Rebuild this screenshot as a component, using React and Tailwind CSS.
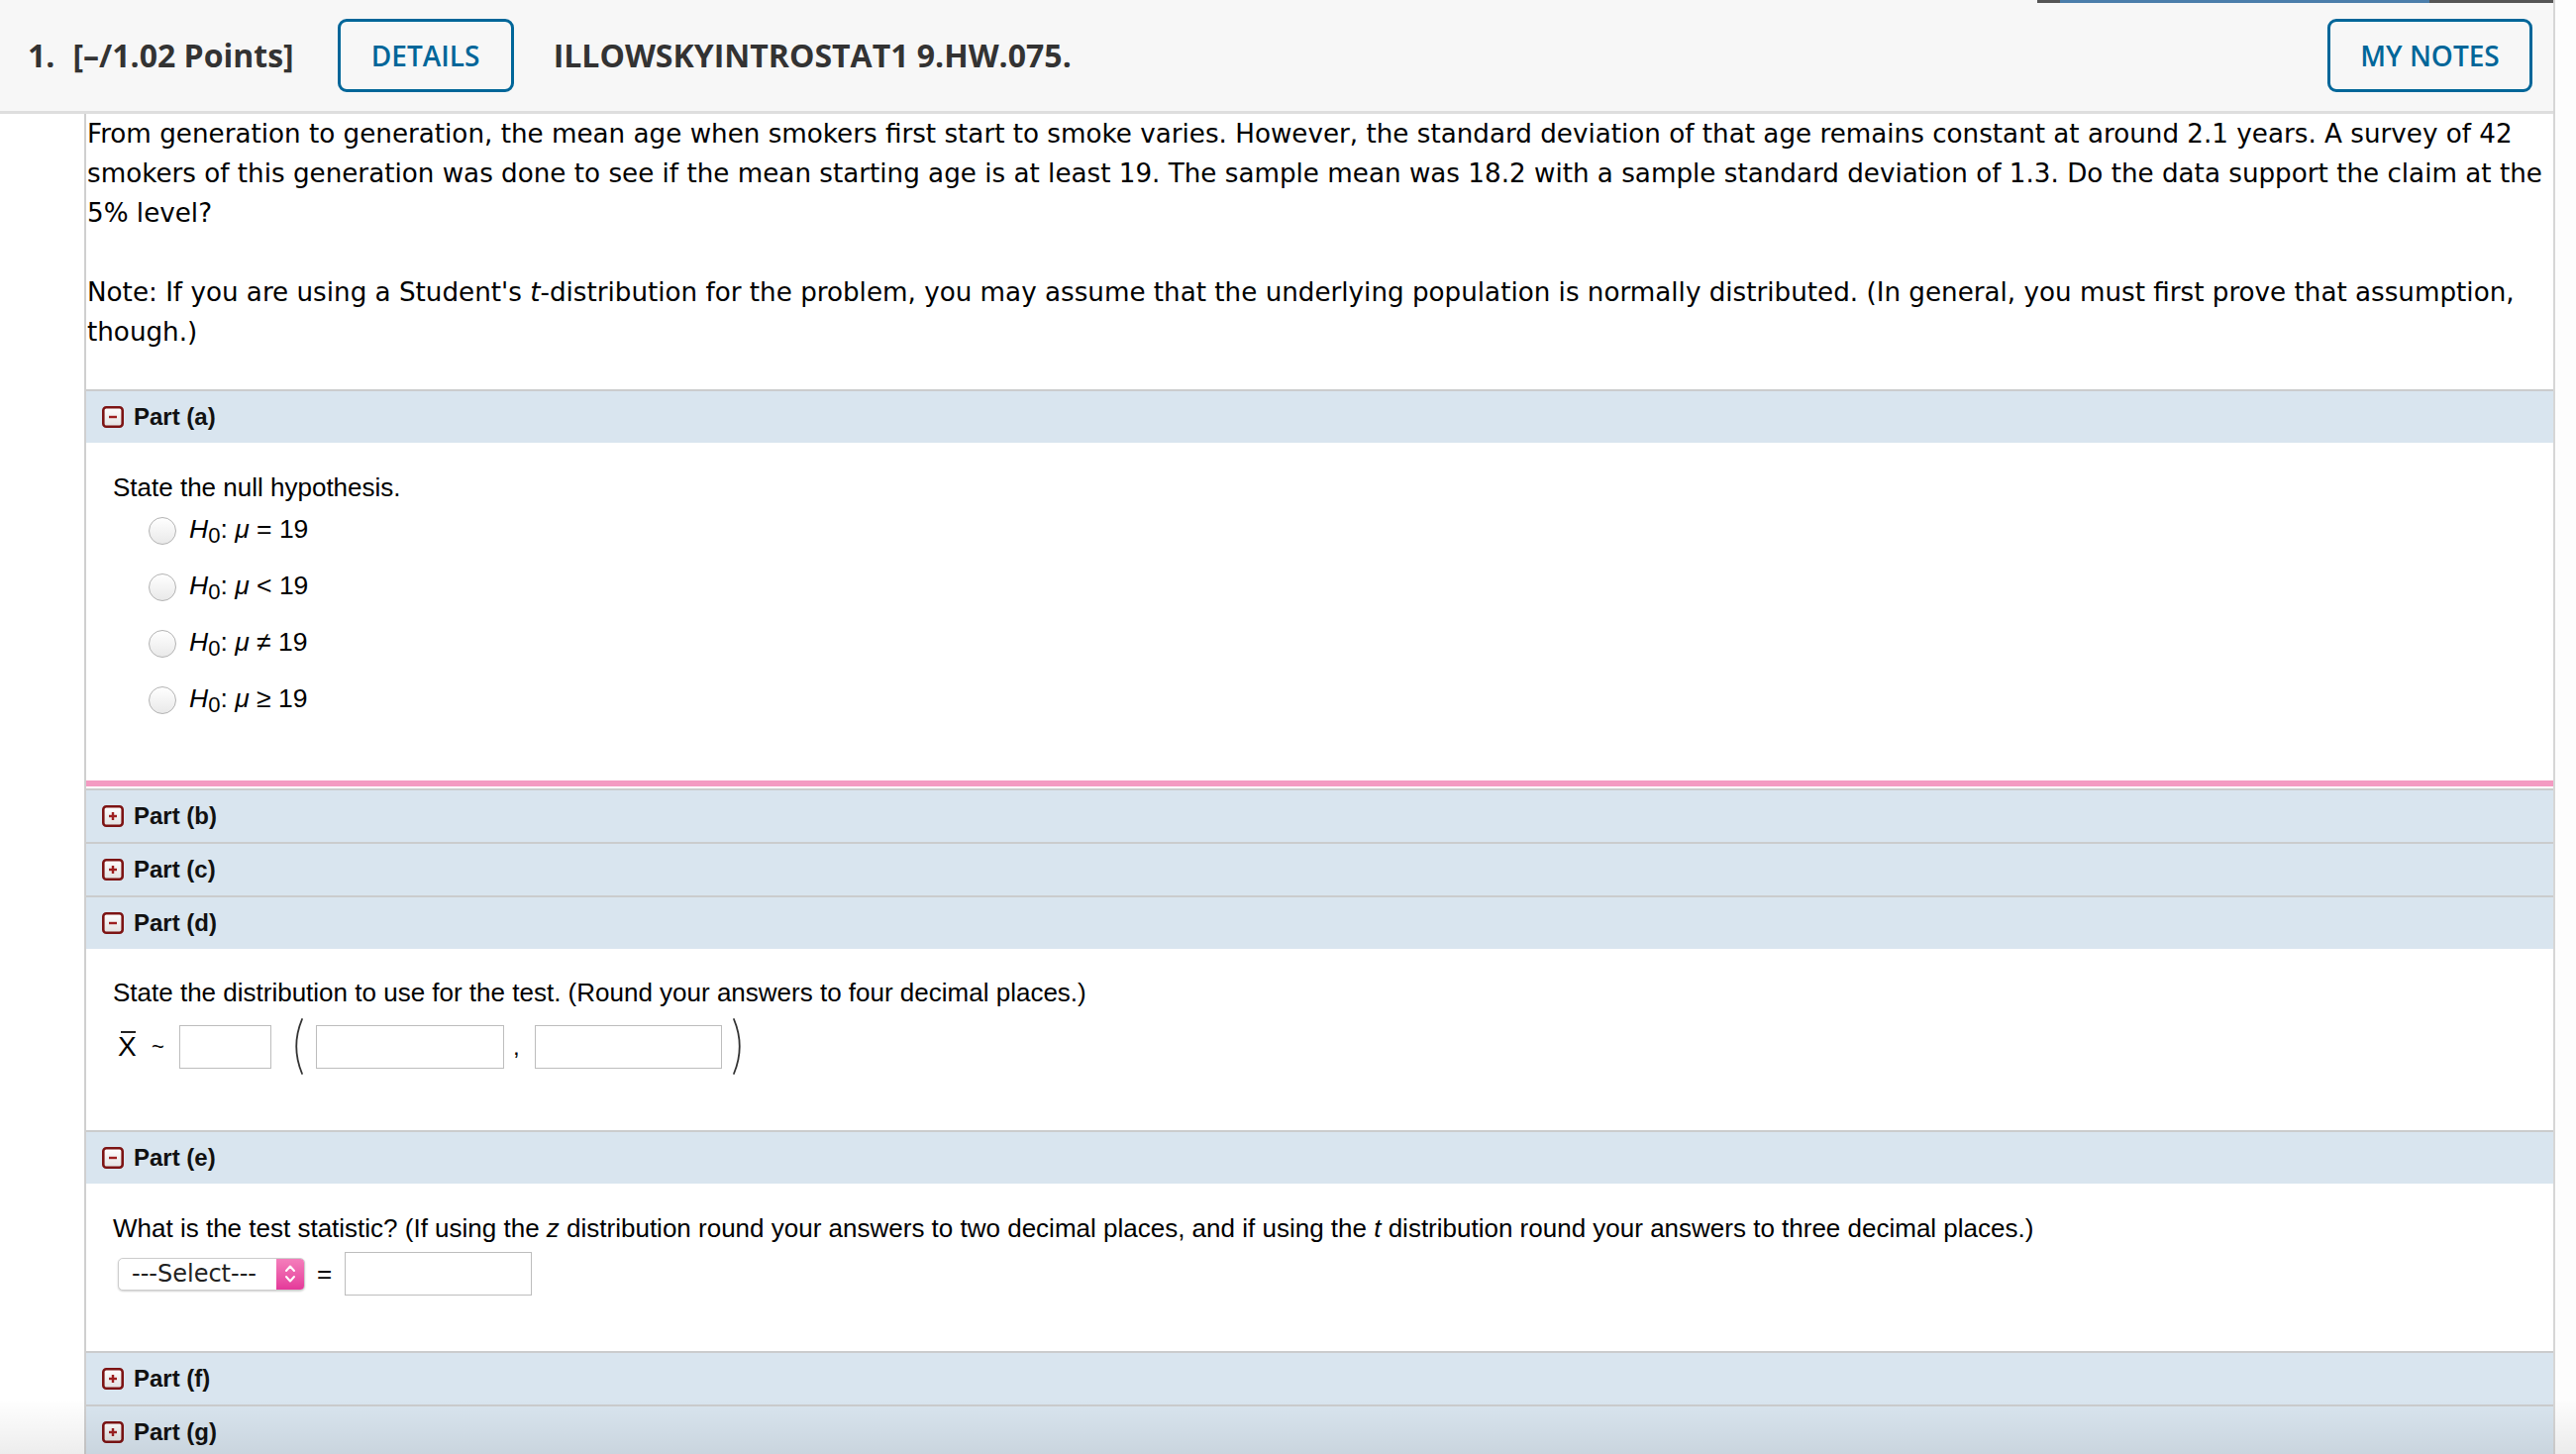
import React from "react";

function BoxIcon({ id, plus }) {
  return (
    <svg width="22" height="22" viewBox="0 0 22 22" className="shrink-0">
      <defs>
        <linearGradient id={id} x1="0" y1="0" x2="0" y2="1">
          <stop offset="0" stopColor="#ffffff" />
          <stop offset="1" stopColor="#e2e2e2" />
        </linearGradient>
      </defs>
      <rect x="1.3" y="1.3" width="19.4" height="19.4" rx="3" fill={`url(#${id})`} stroke="#7d1414" strokeWidth="2.6" />
      <rect x="7" y="9.8" width="8" height="2.4" fill="#9e2020" />
      {plus && <rect x="9.8" y="7" width="2.4" height="8" fill="#9e2020" />}
    </svg>
  );
}

function PartHeader({ label, plus, id }) {
  return (
    <div className="h-[54px] shrink-0 border-t-2 border-[#cbcccd] bg-[#d9e5ef] flex items-center pl-[16px] gap-[10px] font-['Liberation_Sans',Arial,sans-serif]">
      <BoxIcon id={id} plus={plus} />
      <span className="text-[24px] font-bold text-[#111]">{label}</span>
    </div>
  );
}

function Radio() {
  return (
    <span className="w-[28px] h-[28px] shrink-0 rounded-full border border-[#b3b3b3] bg-linear-to-b from-white to-[#e9e9e9]" />
  );
}

function Option({ rel }) {
  return (
    <div className="h-[57px] flex items-center pl-[63px] gap-[13px]">
      <Radio />
      <span className="text-[26.5px] text-black whitespace-nowrap">
        <i>H</i>
        <span className="text-[22px] align-[-5px]">0</span>: <i>μ</i> {rel} 19
      </span>
    </div>
  );
}

function Paren({ right }) {
  return (
    <svg width="14" height="57" viewBox="0 0 14 57" className="shrink-0">
      {right ? (
        <path d="M2 1 Q13.5 28.5 2 56" fill="none" stroke="#333" strokeWidth="1.8" strokeLinecap="round" />
      ) : (
        <path d="M12 1 Q0.5 28.5 12 56" fill="none" stroke="#333" strokeWidth="1.8" strokeLinecap="round" />
      )}
    </svg>
  );
}

function TextInput({ w }) {
  return <div className={`h-[44px] shrink-0 border border-[#bdbdbd] bg-white ${w}`} />;
}

export default function App() {
  return (
    <div className="relative w-[2601px] h-[1468px] overflow-hidden bg-[#fdfdfd]">
      <div className="w-[2580px] h-full border-r-2 border-[#d6d6d6] bg-white flex flex-col">
        {/* Header */}
        <header className="h-[115px] shrink-0 bg-[#f7f7f7] border-b-[3px] border-[#dedede] flex items-center pl-[28px] pr-[21px] font-['Open_Sans',sans-serif] text-[#333]">
          <span className="text-[32px] font-bold">1.</span>
          <span className="ml-[18px] text-[32px] font-bold">[–/1.02 Points]</span>
          <div className="ml-[44px] w-[178px] h-[74px] shrink-0 border-[3px] border-[#006699] rounded-[9px] flex items-center justify-center text-[28px] font-semibold text-[#006699]">
            DETAILS
          </div>
          <span className="ml-[40px] text-[32px] font-bold">ILLOWSKYINTROSTAT1 9.HW.075.</span>
          <div className="ml-auto w-[207px] h-[74px] shrink-0 border-[3px] border-[#006699] rounded-[9px] flex items-center justify-center text-[28px] font-semibold text-[#006699]">
            MY NOTES
          </div>
        </header>

        {/* Body */}
        <div className="flex-1 flex min-h-0">
          <div className="w-[85px] shrink-0" />
          <main className="flex-1 min-w-0 border-l-2 border-[#cfcfcf] flex flex-col">
            <div className="pl-[1px] font-['DejaVu_Sans',Verdana,sans-serif] text-[26.2px] leading-[40px] text-black">
              <p>
                From generation to generation, the mean age when smokers first start to smoke varies. However, the standard deviation of that age remains constant at around 2.1 years. A survey of 42 smokers of this generation was done to see if the mean starting age is at least 19. The sample mean was 18.2 with a sample standard deviation of 1.3. Do the data support the claim at the 5% level?
              </p>
              <p className="mt-[40px]">
                Note: If you are using a Student's <i>t</i>-distribution for the problem, you may assume that the underlying population is normally distributed. (In general, you must first prove that assumption, though.)
              </p>
            </div>

            <div className="mt-[38px] flex flex-col font-['Liberation_Sans',Arial,sans-serif]">
              <PartHeader label="Part (a)" id="ia" />
              <div className="pt-[31px] pb-[53px]">
                <div className="pl-[27px] text-[26px] leading-[29px] text-black">State the null hypothesis.</div>
                <Option rel="=" />
                <Option rel="<" />
                <Option rel="≠" />
                <Option rel="≥" />
              </div>
              <div className="h-[6px] bg-[#f49bc2]" />
              <div className="h-[2px] bg-white" />
              <PartHeader label="Part (b)" plus id="ib" />
              <PartHeader label="Part (c)" plus id="ic" />
              <PartHeader label="Part (d)" id="id" />
              <div className="pt-[30px] pb-[56px]">
                <div className="pl-[27px] text-[26px] leading-[29px] text-black">
                  State the distribution to use for the test. (Round your answers to four decimal places.)
                </div>
                <div className="mt-[11px] h-[57px] flex items-center pl-[32px] text-black">
                  <span className="relative inline-block w-[22px] text-[28px] leading-[30px]">
                    X
                    <span className="absolute left-[3px] w-[15px] top-[-1px] h-[2px] bg-[#222]" />
                  </span>
                  <span className="ml-[12px] w-[15px] text-[22px] leading-none">~</span>
                  <div className="ml-[13px]">
                    <TextInput w="w-[93px]" />
                  </div>
                  <div className="ml-[19px]">
                    <Paren />
                  </div>
                  <div className="ml-[12px]">
                    <TextInput w="w-[190px]" />
                  </div>
                  <span className="ml-[9px] w-[7px] text-[24px]">,</span>
                  <div className="ml-[15px]">
                    <TextInput w="w-[189px]" />
                  </div>
                  <div className="ml-[10px]">
                    <Paren right />
                  </div>
                </div>
              </div>
              <PartHeader label="Part (e)" id="ie" />
              <div className="pt-[31px] pb-[56px]">
                <div className="pl-[27px] text-[26px] leading-[29px] text-black whitespace-nowrap">
                  What is the test statistic? (If using the <i>z</i> distribution round your answers to two decimal places, and if using the <i>t</i> distribution round your answers to three decimal places.)
                </div>
                <div className="mt-[9px] h-[44px] flex items-center pl-[32px]">
                  <div className="w-[189px] h-[33px] shrink-0 flex rounded-[5px] border border-[#cdcdcd] bg-white shadow-[0_1px_2px_rgba(0,0,0,0.18)] overflow-hidden">
                    <div className="flex-1 flex items-center pl-[13px] font-['DejaVu_Sans',sans-serif] text-[24px] text-[#222] whitespace-nowrap">
                      ---Select---
                    </div>
                    <div className="w-[28px] h-full shrink-0 bg-linear-to-b from-[#f47dbb] to-[#e4389a] flex items-center justify-center">
                      <svg width="14" height="22" viewBox="0 0 14 22">
                        <path d="M3 8 L7 3.5 L11 8" fill="none" stroke="#fff" strokeWidth="2" strokeLinecap="round" strokeLinejoin="round" />
                        <path d="M3 14 L7 18.5 L11 14" fill="none" stroke="#fff" strokeWidth="2" strokeLinecap="round" strokeLinejoin="round" />
                      </svg>
                    </div>
                  </div>
                  <span className="ml-[12px] w-[14px] text-[26px] text-black">=</span>
                  <div className="ml-[14px]">
                    <TextInput w="w-[189px]" />
                  </div>
                </div>
              </div>
              <PartHeader label="Part (f)" plus id="if" />
              <PartHeader label="Part (g)" plus id="ig" />
            </div>
          </main>
        </div>
      </div>

      {/* thin bar at top right (edge of another window) */}
      <div className="absolute top-0 left-[2057px] w-[521px] h-[3px] flex">
        <div className="w-[23px] bg-[#555]" />
        <div className="w-[373px] bg-[#4b7eab]" />
        <div className="flex-1 bg-[#555]" />
      </div>

      {/* bottom shade */}
      <div className="pointer-events-none absolute left-0 right-0 bottom-0 h-[56px] bg-linear-to-b from-[rgba(0,0,0,0)] to-[rgba(0,0,0,0.07)]" />
    </div>
  );
}
